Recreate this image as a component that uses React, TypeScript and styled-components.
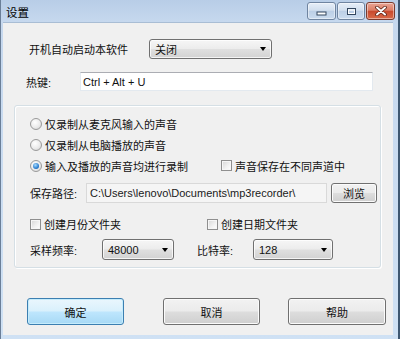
import React from 'react'
import styled, { createGlobalStyle, css } from 'styled-components'

const GlobalStyle = createGlobalStyle`
  html, body { margin: 0; padding: 0; }
  body {
    font-family: "Liberation Sans", "Noto Sans CJK SC", sans-serif;
    font-size: 11px;
    color: #111;
    background: #fff;
  }
  * { box-sizing: border-box; }
`

const Window = styled.div`
  width: 400px;
  height: 339px;
  display: flex;
  flex-direction: column;
  background: linear-gradient(to bottom, #b8cde7 0, #c6d8ee 22px, #cfe1f4 100%);
  border-left: 1px solid #6b7f98;
  border-right: 2px solid #3e5771;
`

const TitleBar = styled.div`
  height: 22px;
  flex: none;
  display: flex;
  align-items: center;
  justify-content: space-between;
  padding: 0 3px 0 5px;
`

const Title = styled.span`
  font-size: 11.5px;
  padding-top: 2px;
  color: #000;
`

const Captions = styled.div`
  display: flex;
  gap: 1px;
`

const CapButton = styled.div<{ $close?: boolean; $w: number }>`
  width: ${p => p.$w}px;
  height: 18px;
  border: 1px solid ${p => (p.$close ? '#7a3b2e' : '#6f84a0')};
  border-radius: 3px;
  display: flex;
  align-items: center;
  justify-content: center;
  box-shadow: inset 0 0 0 1px rgba(255, 255, 255, 0.45);
  background: ${p =>
    p.$close
      ? 'linear-gradient(to bottom, #e9a595 0%, #dc7e66 45%, #c84a2e 52%, #d96a48 100%)'
      : 'linear-gradient(to bottom, #e6eef8 0%, #d2dfee 45%, #bccfe6 52%, #cbdcef 100%)'};
`

const Client = styled.div`
  flex: 1;
  margin: 0 5px 4px 2px;
  background: #f0f0f0;
  border-top: 1px solid #a9bdd4;
  display: flex;
  flex-direction: column;
  padding-top: 15px;
`

const Row = styled.div<{ $top?: number; $left?: number; $h?: number }>`
  display: flex;
  align-items: center;
  height: ${p => p.$h ?? 20}px;
  margin-top: ${p => p.$top ?? 0}px;
  padding-left: ${p => p.$left ?? 0}px;
`

const Label = styled.span<{ $w: number; $ml?: number }>`
  width: ${p => p.$w}px;
  margin-left: ${p => p.$ml ?? 0}px;
  flex: none;
  white-space: nowrap;
`

const Combo = styled.div<{ $w: number; $h?: number }>`
  width: ${p => p.$w}px;
  height: ${p => p.$h ?? 21}px;
  flex: none;
  border: 1px solid #707070;
  border-radius: 3px;
  background: linear-gradient(to bottom, #f6f6f6 0%, #ececec 48%, #dfdfdf 52%, #d2d2d2 100%);
  box-shadow: inset 0 0 0 1px rgba(255, 255, 255, 0.75);
  display: flex;
  align-items: center;
  justify-content: space-between;
  padding: 0 5px 0 5px;
`

const Arrow = styled.span`
  width: 0;
  height: 0;
  border-left: 3.5px solid transparent;
  border-right: 3.5px solid transparent;
  border-top: 4px solid #000;
`

const TextBox = styled.div<{ $w: number; $h?: number; $readonly?: boolean }>`
  width: ${p => p.$w}px;
  height: ${p => p.$h ?? 20}px;
  flex: none;
  display: flex;
  align-items: center;
  padding-left: ${p => (p.$readonly ? 3 : 2)}px;
  white-space: nowrap;
  overflow: hidden;
  ${p =>
    p.$readonly
      ? css`
          background: #f5f5f5;
          border: 1px solid #d9d9d9;
          color: #1a1a1a;
        `
      : css`
          background: #fff;
          border: 1px solid #e3e9ef;
          border-top-color: #abadb3;
        `}
`

const Group = styled.div`
  margin: 14px 0 0 11px;
  width: 367px;
  border: 1px solid #d5dfe5;
  border-radius: 3px;
  box-shadow: inset 1px 1px 0 #fff, 1px 1px 0 #fff;
  padding: 7px 0 7px 15px;
  display: flex;
  flex-direction: column;
`

const Option = styled.label<{ $w?: number }>`
  display: flex;
  align-items: center;
  gap: 3px;
  ${p => p.$w && css`width: ${p.$w}px; flex: none;`}
`

const Radio = styled.span<{ $on?: boolean }>`
  width: 12px;
  height: 12px;
  flex: none;
  border-radius: 50%;
  border: 1px solid #9a9a9a;
  background: radial-gradient(circle at 40% 35%, #ffffff 0%, #ebebeb 55%, #cdcdcd 100%);
  display: flex;
  align-items: center;
  justify-content: center;
  ${p =>
    p.$on &&
    css`
      &::after {
        content: '';
        width: 6px;
        height: 6px;
        border-radius: 50%;
        background: radial-gradient(circle at 40% 35%, #a8dcff 0%, #2d7fd0 60%, #114f94 100%);
      }
    `}
`

const Check = styled.span`
  width: 11px;
  height: 11px;
  flex: none;
  border: 1px solid #8f8f8f;
  background: linear-gradient(135deg, #d6d6d6 0%, #f2f2f2 60%, #ffffff 100%);
  box-shadow: inset 0 0 0 1px #f6f6f6;
`

const Button = styled.div<{ $default?: boolean; $left: number; $w?: number }>`
  width: ${p => p.$w ?? 97}px;
  height: 27px;
  margin-left: ${p => p.$left}px;
  flex: none;
  display: flex;
  align-items: center;
  justify-content: center;
  border-radius: 3px;
  border: 1px solid ${p => (p.$default ? '#3c7fb1' : '#707070')};
  box-shadow: inset 0 0 0 1px ${p => (p.$default ? '#c5ecfc' : '#fbfbfb')};
  background: ${p =>
    p.$default
      ? 'linear-gradient(to bottom, #eaf6fd 0%, #d9f0fc 48%, #bee6fd 52%, #a7d9f5 100%)'
      : 'linear-gradient(to bottom, #f2f2f2 0%, #ebebeb 48%, #dddddd 52%, #cfcfcf 100%)'};
`

const SmallButton = styled(Button)`
  height: 20px;
`

const MinGlyph = () => (
  <svg width="11" height="9" viewBox="0 0 11 9">
    <rect x="1" y="5" width="9" height="3" fill="#fff" stroke="#33465e" strokeWidth="1" />
  </svg>
)

const MaxGlyph = () => (
  <svg width="11" height="9" viewBox="0 0 11 9">
    <rect x="1.5" y="1.5" width="8" height="6" fill="none" stroke="#33465e" strokeWidth="1" />
    <rect x="2.5" y="3" width="6" height="3.5" fill="none" stroke="#ffffff" strokeWidth="1" />
  </svg>
)

const CloseGlyph = () => (
  <svg width="12" height="10" viewBox="0 0 12 10">
    <path d="M2 1.5 L10 8.5 M10 1.5 L2 8.5" stroke="#5a2418" strokeWidth="3.6" strokeLinecap="round" />
    <path d="M2 1.5 L10 8.5 M10 1.5 L2 8.5" stroke="#ffffff" strokeWidth="2" strokeLinecap="round" />
  </svg>
)

export default function App() {
  return (
    <>
      <GlobalStyle />
      <Window>
        <TitleBar>
          <Title>设置</Title>
          <Captions>
            <CapButton $w={29}><MinGlyph /></CapButton>
            <CapButton $w={28}><MaxGlyph /></CapButton>
            <CapButton $w={29} $close><CloseGlyph /></CapButton>
          </Captions>
        </TitleBar>
        <Client>
          <Row $left={26} $h={21}>
            <Label $w={120}>开机自动启动本软件</Label>
            <Combo $w={123} $h={20}>
              <span>关闭</span>
              <Arrow />
            </Combo>
          </Row>
          <Row $left={23} $top={13} $h={19}>
            <Label $w={54}>热键:</Label>
            <TextBox $w={293} $h={19}>Ctrl + Alt + U</TextBox>
          </Row>
          <Group>
            <Row $h={21}>
              <Option><Radio />仅录制从麦克风输入的声音</Option>
            </Row>
            <Row $h={21}>
              <Option><Radio />仅录制从电脑播放的声音</Option>
            </Row>
            <Row $h={21}>
              <Option $w={191}><Radio $on />输入及播放的声音均进行录制</Option>
              <Option><Check />声音保存在不同声道中</Option>
            </Row>
            <Row $top={6} $h={21}>
              <Label $w={56}>保存路径:</Label>
              <TextBox $w={241} $readonly>C:\Users\lenovo\Documents\mp3recorder\</TextBox>
              <SmallButton $left={4} $w={46}>浏览</SmallButton>
            </Row>
            <Row $top={11} $h={20}>
              <Option $w={177}><Check />创建月份文件夹</Option>
              <Option><Check />创建日期文件夹</Option>
            </Row>
            <Row $top={5} $h={21}>
              <Label $w={72}>采样频率:</Label>
              <Combo $w={72}>
                <span>48000</span>
                <Arrow />
              </Combo>
              <Label $w={56} $ml={23}>比特率:</Label>
              <Combo $w={80}>
                <span>128</span>
                <Arrow />
              </Combo>
            </Row>
          </Group>
          <Row $top={30} $h={27}>
            <Button $default $left={24}>确定</Button>
            <Button $left={39}>取消</Button>
            <Button $left={28} $w={98}>帮助</Button>
          </Row>
        </Client>
      </Window>
    </>
  )
}
